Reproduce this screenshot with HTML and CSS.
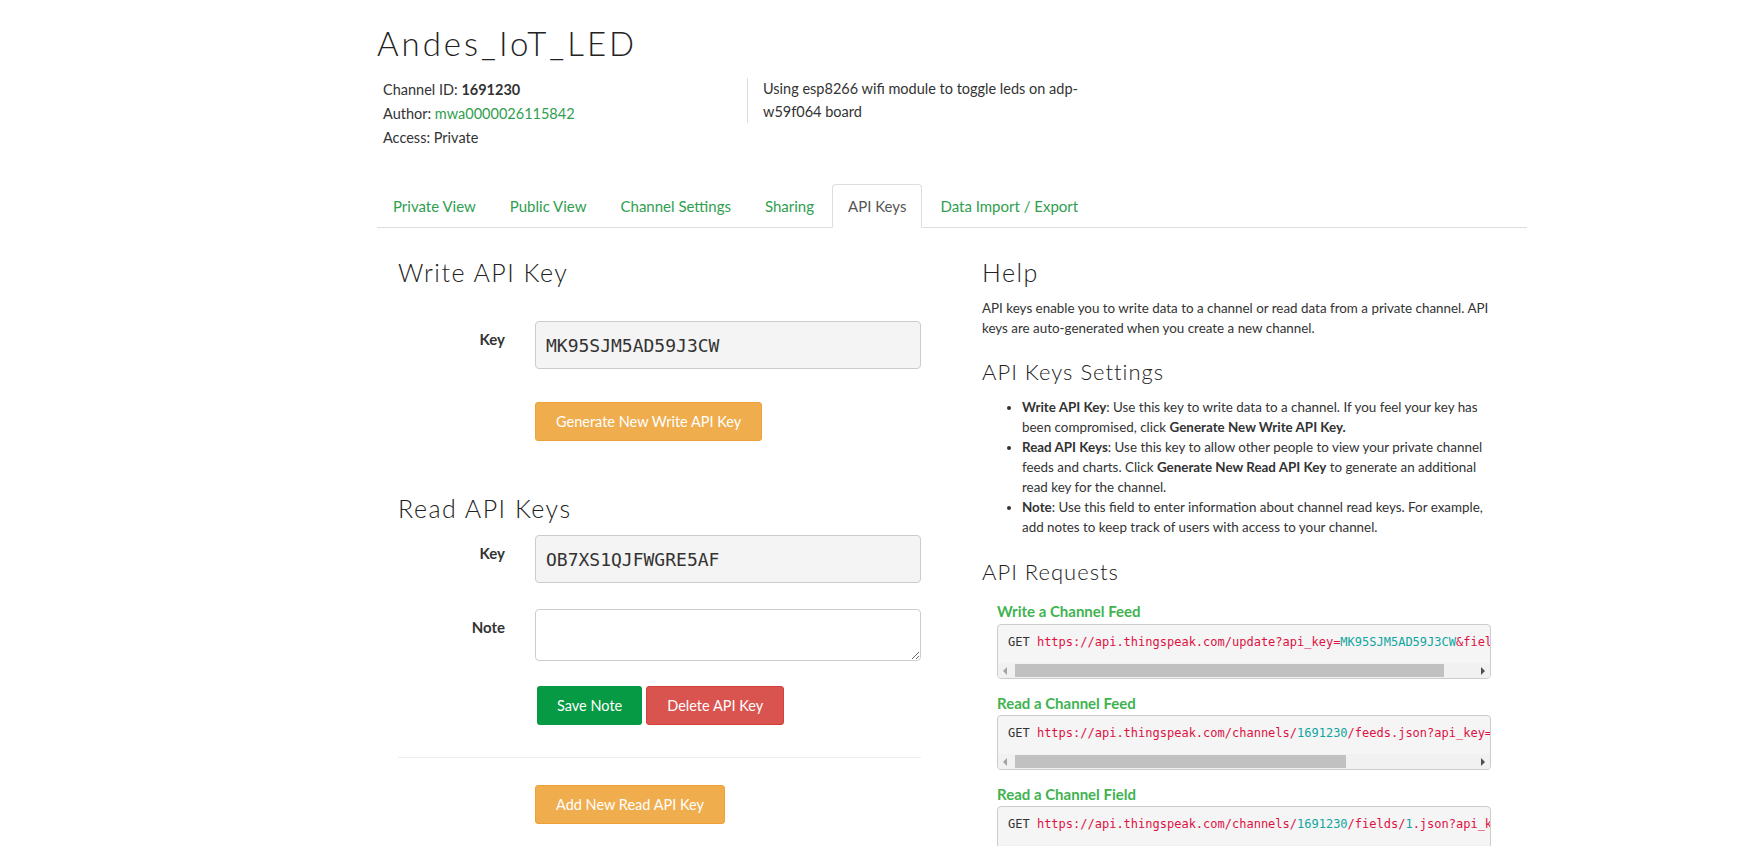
FILE: index.html
```html
<!DOCTYPE html>
<html lang="en">
<head>
<meta charset="utf-8">
<title>Andes_IoT_LED - API Keys</title>
<link rel="stylesheet" href="styles.css">
</head>
<body>
<div class="page">
  <h1 class="title">Andes_IoT_LED</h1>
  <div class="meta">
    <div class="meta-info">
      <div>Channel ID: <strong>1691230</strong></div>
      <div>Author: <a class="link" href="#">mwa0000026115842</a></div>
      <div>Access: Private</div>
    </div>
    <div class="meta-desc">Using esp8266 wifi module to toggle leds on adp-w59f064 board</div>
  </div>

  <ul class="tabs">
    <li><a href="#">Private View</a></li>
    <li><a href="#">Public View</a></li>
    <li><a href="#">Channel Settings</a></li>
    <li><a href="#">Sharing</a></li>
    <li class="active"><a href="#">API Keys</a></li>
    <li><a href="#">Data Import / Export</a></li>
  </ul>

  <div class="main">
    <div class="left">
      <h2 class="heading">Write API Key</h2>
      <div class="form-row first">
        <label class="form-label">Key</label>
        <input class="key-input" type="text" readonly value="MK95SJM5AD59J3CW">
      </div>
      <div class="btn-row gen-row">
        <button class="btn btn-warning">Generate New Write API Key</button>
      </div>

      <h2 class="heading read-heading">Read API Keys</h2>
      <div class="form-row read-row">
        <label class="form-label">Key</label>
        <input class="key-input" type="text" readonly value="OB7XS1QJFWGRE5AF">
      </div>
      <div class="form-row note-row">
        <label class="form-label">Note</label>
        <textarea class="note-input"></textarea>
      </div>
      <div class="btn-row note-btns">
        <button class="btn btn-success">Save Note</button>
        <button class="btn btn-danger">Delete API Key</button>
      </div>
      <hr class="divider">
      <div class="btn-row add-row">
        <button class="btn btn-warning">Add New Read API Key</button>
      </div>
    </div>

    <div class="right">
      <h2 class="heading">Help</h2>
      <p class="help-text">API keys enable you to write data to a channel or read data from a private channel. API keys are auto-generated when you create a new channel.</p>

      <h3 class="subheading settings-heading">API Keys Settings</h3>
      <ul class="help-list">
        <li><strong>Write API Key</strong>: Use this key to write data to a channel. If you feel your key has been compromised, click <strong>Generate New Write API Key.</strong></li>
        <li><strong>Read API Keys</strong>: Use this key to allow other people to view your private channel feeds and charts. Click <strong>Generate New Read API Key</strong> to generate an additional read key for the channel.</li>
        <li><strong>Note</strong>: Use this field to enter information about channel read keys. For example, add notes to keep track of users with access to your channel.</li>
      </ul>

      <h3 class="subheading requests-heading">API Requests</h3>

      <div class="req-title first-req">Write a Channel Feed</div>
      <div class="code">
        <div class="code-line"><span class="verb">GET</span> <span class="url">https://api.thingspeak.com/update?api_key=</span><span class="val">MK95SJM5AD59J3CW</span><span class="url">&amp;field1=</span><span class="val">0</span></div>
        <div class="hscroll">
          <span class="arrow arrow-left"></span>
          <span class="track"><span class="thumb" style="width:429px"></span></span>
          <span class="arrow arrow-right"></span>
        </div>
      </div>

      <div class="req-title">Read a Channel Feed</div>
      <div class="code">
        <div class="code-line"><span class="verb">GET</span> <span class="url">https://api.thingspeak.com/channels/</span><span class="val">1691230</span><span class="url">/feeds.json?api_key=</span><span class="val">OB7XS1QJFWGRE5AF</span><span class="url">&amp;results=</span><span class="val">2</span></div>
        <div class="hscroll">
          <span class="arrow arrow-left"></span>
          <span class="track"><span class="thumb" style="width:331px"></span></span>
          <span class="arrow arrow-right"></span>
        </div>
      </div>

      <div class="req-title">Read a Channel Field</div>
      <div class="code">
        <div class="code-line"><span class="verb">GET</span> <span class="url">https://api.thingspeak.com/channels/</span><span class="val">1691230</span><span class="url">/fields/</span><span class="val">1</span><span class="url">.json?api_key=</span><span class="val">OB7XS1QJFWGRE5AF</span><span class="url">&amp;results=</span><span class="val">2</span></div>
        <div class="hscroll">
          <span class="arrow arrow-left"></span>
          <span class="track"><span class="thumb" style="width:318px"></span></span>
          <span class="arrow arrow-right"></span>
        </div>
      </div>
    </div>
  </div>
</div>
</body>
</html>
```

FILE: styles.css
```css
* { box-sizing: border-box; }

html, body {
  margin: 0;
  padding: 0;
  background: #fff;
}

body {
  font-family: Lato, "Liberation Sans", sans-serif;
  font-size: 15px;
  color: #333;
  overflow: hidden;
}

.page {
  margin-left: 377px;
  width: 1150px;
  padding-top: 23px;
}

.title {
  margin: 0;
  font-family: Lato, sans-serif;
  font-weight: 300;
  font-size: 33px;
  line-height: 40px;
  letter-spacing: 3px;
  color: #222;
}

.meta {
  display: flex;
  align-items: flex-start;
  margin-top: 15px;
}

.meta-info {
  width: 370px;
  padding-left: 6px;
  font-size: 14.5px;
  line-height: 24px;
}

.meta-info strong { font-weight: 700; }

.link {
  color: #2f9e4f;
  text-decoration: none;
}

.meta-desc {
  width: 345px;
  border-left: 1px solid #ddd;
  padding-left: 15px;
  font-size: 14.5px;
  line-height: 22.5px;
}

.tabs {
  list-style: none;
  margin: 34px 0 0 0;
  padding: 0;
  display: flex;
  border-bottom: 1px solid #ddd;
}

.tabs li {
  margin-bottom: -1px;
  margin-right: 2px;
}

.tabs a {
  display: block;
  padding: 10px 15px;
  border: 1px solid transparent;
  border-radius: 4px 4px 0 0;
  font-size: 15px;
  line-height: 22px;
  color: #2f9e4f;
  text-decoration: none;
}

.tabs .active a {
  color: #555;
  background: #fff;
  border-color: #ddd #ddd transparent #ddd;
}

.main {
  display: flex;
  gap: 61px;
  padding-left: 21px;
  padding-top: 29px;
}

.left { width: 523px; }
.right { width: 515px; }

.heading {
  margin: 0;
  font-family: Lato, sans-serif;
  font-weight: 300;
  font-size: 25px;
  line-height: 30px;
  letter-spacing: 1.5px;
  color: #222;
}

.heading.read-heading { margin-top: 52px; }

.subheading {
  margin: 0;
  font-family: Lato, sans-serif;
  font-weight: 300;
  font-size: 22px;
  line-height: 26.4px;
  letter-spacing: 1px;
  color: #222;
}

.form-row {
  display: flex;
  align-items: flex-start;
  gap: 30px;
}

.form-row.first { margin-top: 34px; }
.form-row.read-row { margin-top: 12px; }
.form-row.note-row { margin-top: 26px; }

.form-label {
  width: 107px;
  text-align: right;
  font-weight: 700;
  font-size: 15px;
  line-height: 20px;
  padding-top: 8px;
}

.key-input {
  width: 386px;
  height: 48px;
  margin: 0;
  padding: 0 10px;
  border: 1px solid #ccc;
  border-radius: 4px;
  background: #f4f4f4;
  font-family: "DejaVu Sans Mono", monospace;
  font-size: 18px;
  color: #333;
  outline: none;
}

.note-input {
  width: 386px;
  height: 52px;
  margin: 0;
  padding: 6px 10px;
  border: 1px solid #ccc;
  border-radius: 4px;
  background: #fff;
  font-family: Lato, sans-serif;
  font-size: 15px;
  display: block;
}

.btn-row {
  display: flex;
  gap: 4px;
  padding-left: 137px;
}

.gen-row { margin-top: 33px; }
.note-btns { margin-top: 25px; }
.add-row { margin-top: 27px; }

.btn {
  font-family: Lato, sans-serif;
  font-size: 14.5px;
  line-height: 21px;
  padding: 8px 20px;
  border: 1px solid transparent;
  border-radius: 3px;
  color: #fff;
  cursor: pointer;
}

.btn-warning {
  background: #f0ad4e;
  border-color: #eea236;
}

.btn-success {
  background: #069a44;
  border: 0;
  margin-left: 2px;
}

.btn-danger {
  background: #d9534f;
  border-color: #d43f3a;
}

.divider {
  margin: 32px 0 0 0;
  border: 0;
  border-top: 1px solid #eee;
  height: 0;
}

.help-text {
  margin: 11px 0 0 0;
  font-size: 13.4px;
  line-height: 20px;
}

.settings-heading { margin-top: 21px; }

.help-list {
  margin: 12px 0 0 0;
  padding-left: 40px;
  padding-right: 14px;
  font-size: 13.4px;
  line-height: 20px;
}

.help-list strong { font-weight: 700; }

.requests-heading { margin-top: 22px; }

.req-title {
  margin: 14px 0 2px 15px;
  font-size: 15px;
  line-height: 20px;
  font-weight: 700;
  color: #3fb34f;
}

.req-title.first-req {
  margin-top: 15px;
  margin-bottom: 3px;
}

.code {
  margin-left: 15px;
  width: 494px;
  border: 1px solid #ccc;
  border-radius: 4px;
  background: #f5f5f5;
  overflow: hidden;
}

.code-line {
  padding: 9px 0 12px 10px;
  white-space: pre;
  overflow: hidden;
  font-family: "DejaVu Sans Mono", monospace;
  font-size: 12px;
  line-height: 17px;
}

.verb { color: #333; }
.url { color: #dd1144; }
.val { color: #10a5a0; }

.hscroll {
  display: flex;
  align-items: center;
  height: 15px;
  background: #f1f1f1;
}

.arrow {
  width: 15px;
  height: 15px;
  position: relative;
  flex: none;
}

.arrow::after {
  content: "";
  position: absolute;
  top: 4px;
  width: 0;
  height: 0;
  border-top: 4px solid transparent;
  border-bottom: 4px solid transparent;
}

.arrow-left::after {
  left: 5px;
  border-right: 4px solid #a3a3a3;
}

.arrow-right::after {
  left: 6px;
  border-left: 4px solid #505050;
}

.track {
  flex: 1;
  height: 15px;
  display: flex;
  align-items: center;
  padding-left: 2px;
}

.thumb {
  display: block;
  height: 13px;
  background: #c1c1c1;
}
```
